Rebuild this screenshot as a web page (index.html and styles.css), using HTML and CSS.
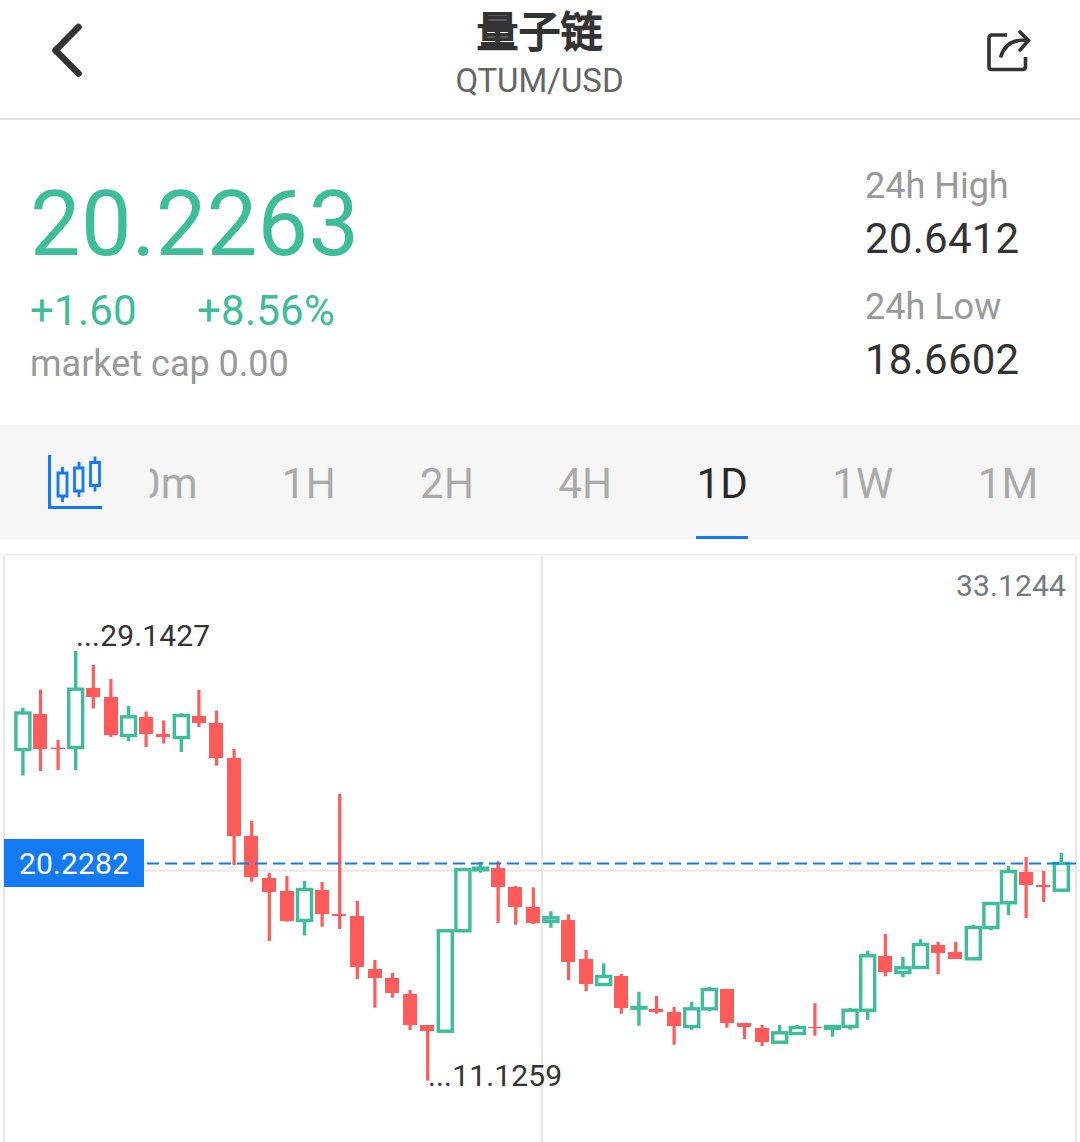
FILE: index.html
```
<!DOCTYPE html>
<html lang="zh-CN">
<head>
  <meta charset="UTF-8">
  <meta name="viewport" content="width=device-width, initial-scale=1.0">
  <title>QTUM/USD</title>
  <link rel="stylesheet" href="styles.css">
</head>
<body>
  <header class="header">
    <svg class="back" width="36" height="60" viewBox="0 0 36 60">
      <path d="M31.500 7 L8.500 30.200 L31.500 53.500"></path>
    </svg>
    <div class="heading">
      <h1>量子链</h1>
      <div class="pair">QTUM/USD</div>
    </div>
    <svg class="share" width="48" height="46" viewBox="0 0 48 46">
      <path d="M22 7 H7 Q4 7 4 10 V38.500 Q4 41.500 7 41.500 H37.500 Q40.500 41.500 40.500 38.500 V29"></path>
      <path d="M15.500 29.500 C19 17 28 11 42 12.500"></path>
      <path d="M35 4 L43.500 12.500 L35 22" stroke-linecap="round"></path>
    </svg>
  </header>

  <section class="quote">
    <div class="quote-main">
      <div class="price">20.2263</div>
      <div class="change">
        <span>+1.60</span>
        <span>+8.56%</span>
      </div>
      <div class="market-cap">market cap 0.00</div>
    </div>
    <div class="range">
      <div class="range-label">24h High</div>
      <div class="range-value">20.6412</div>
      <div class="range-label">24h Low</div>
      <div class="range-value">18.6602</div>
    </div>
  </section>

  <nav class="periods">
    <svg class="chart-type" width="56" height="56" viewBox="0 0 56 56">
      <path d="M2.500 1 V53.500 H55"></path>
      <path class="thin" d="M11 19 H20 V42 H11 Z M15.500 13 V19 M15.500 42 V48 M27.500 14 H36 V37 H27.500 Z M32 8 V14 M32 37 V43 M43.500 8.500 H52.500 V31.500 H43.500 Z M48 2.500 V8.500 M48 31.500 V37.500"></path>
    </svg>
    <div class="tabs">
      <span class="tab">30m</span>
      <span class="tab">1H</span>
      <span class="tab">2H</span>
      <span class="tab">4H</span>
      <span class="tab active">1D</span>
      <span class="tab">1W</span>
      <span class="tab">1M</span>
    </div>
  </nav>

  <svg id="chart" class="chart" width="1080" height="603" viewBox="0 539 1080 603">
    <g class="grid">
      <path class="top" d="M4 554.500 H1076"></path>
      <path d="M4 556 V1142 M542 556 V1142 M1076 556 V1142 M144 870.500 H1080"></path>
    </g>
    <g id="candles"></g>
    <path class="last-line" d="M147 863.500 H1076"></path>
    <rect class="last-tag" x="4" y="839" width="140" height="48"></rect>
    <text class="last-text" x="19" y="874">20.2282</text>
    <text class="axis-text" x="1066" y="596" text-anchor="end">33.1244</text>
    <text class="mark-text" x="76" y="646">...29.1427</text>
    <text class="mark-text" x="428" y="1086">...11.1259</text>
  </svg>

  <script src="chart.js"></script>
</body>
</html>
```
FILE: styles.css
```
body {
  margin: 0;
  width: 1080px;
  height: 1142px;
  overflow: hidden;
  background: #fff;
  color: #333;
  font-family: Roboto, "Noto Sans CJK SC", sans-serif;
}
.header {
  display: flex;
  justify-content: space-between;
  box-sizing: border-box;
  height: 120px;
  padding: 0 47px;
  border-bottom: 2px solid #e4e4e4;
}
.header svg,
.chart-type {
  fill: none;
  stroke: #333;
  flex: none;
}
.back {
  margin-top: 20px;
  stroke-width: 6.6;
  stroke-linecap: round;
  stroke-linejoin: round;
}
.share {
  margin-top: 28px;
  stroke-width: 3.6;
}
.heading {
  text-align: center;
  padding-left: 11px;
}
h1 {
  margin: 3px 0 -2px;
  font-size: 42px;
  line-height: 60px;
  font-weight: normal;
  -webkit-text-stroke: 1.8px #333;
}
.pair {
  font-size: 33px;
  line-height: 40px;
  color: #666;
}
.quote {
  display: flex;
  justify-content: space-between;
  box-sizing: border-box;
  height: 305px;
  padding: 43px 59px 0 30px;
}
.price {
  margin-top: 9px;
  font-size: 90px;
  line-height: 106px;
  letter-spacing: 0.3px;
  color: #3dbd9a;
}
.change {
  display: flex;
  gap: 60px;
  margin-top: 7px;
  font-size: 42px;
  line-height: 52px;
  letter-spacing: 0.25px;
  color: #3dbd9a;
}
.market-cap,
.range-label {
  font-size: 36px;
  line-height: 46px;
  color: #999;
}
.market-cap {
  margin-top: 4px;
}
.range {
  width: 156px;
  white-space: nowrap;
}
.range-value {
  margin: 1px 0 17px;
  font-size: 42px;
  line-height: 57px;
  letter-spacing: 0.25px;
}
.periods {
  display: flex;
  height: 114px;
  background: #f6f6f6;
}
.chart-type {
  margin: 29px 47px 0;
  stroke: #147af3;
  stroke-width: 3;
}
.chart-type .thin {
  stroke-width: 2.8;
}
.tabs {
  display: flex;
  flex: 1;
  justify-content: flex-end;
  gap: 84px;
  padding-right: 41.5px;
  overflow: hidden;
}
.tab {
  box-sizing: border-box;
  height: 114px;
  font-size: 42px;
  line-height: 117px;
  letter-spacing: 0.3px;
  color: #aaa;
}
.tab.active {
  color: #282828;
  border-bottom: 3px solid #147af3;
}
.chart {
  display: block;
  font-size: 30px;
  letter-spacing: 0.15px;
}
.grid path {
  stroke: #e8e8e8;
  stroke-width: 2;
}
.grid .top {
  stroke-width: 1;
}
.up {
  fill: none;
  stroke: #3dbd9a;
  stroke-width: 3.4;
}
.down {
  fill: #ff5b5b;
}
.last-line {
  stroke: #147af3;
  stroke-width: 2.2;
  stroke-dasharray: 12 6;
}
.last-tag {
  fill: #147af3;
}
.last-text {
  fill: #fff;
}
.axis-text {
  fill: #737b80;
}
.mark-text {
  fill: #333;
}
```
FILE: chart.js
```
// direction, high, body top, body bottom, low
const candles = [
  ['up', 707.7, 711.5, 751, 775.5],
  ['down', 689.5, 714, 749, 771],
  ['down', 740, 747.7, 749, 770],
  ['up', 651, 687.7, 749, 770],
  ['down', 665, 688, 697, 708.5],
  ['down', 679, 697, 735, 737],
  ['up', 706, 715.3, 737, 741],
  ['down', 711.5, 717, 734, 747],
  ['down', 720.5, 734, 737, 743.5],
  ['up', 713.5, 714, 739, 752],
  ['down', 690, 716, 723, 727],
  ['down', 710.5, 723, 758, 765.7],
  ['down', 749, 758, 836, 865],
  ['down', 821, 836, 877, 881.7],
  ['down', 873, 878, 892, 941],
  ['down', 876, 891, 921, 921.7],
  ['up', 881, 888, 922, 935.6],
  ['down', 882, 890, 914, 926.7],
  ['down', 793.7, 914, 916, 929],
  ['down', 901, 916, 967, 979],
  ['down', 960, 969, 978, 1007.7],
  ['down', 973, 978, 993, 997.7],
  ['down', 990, 994, 1025, 1030],
  ['down', 1025, 1025, 1031, 1080.7],
  ['up', 929.3, 929.3, 1032.7, 1032.7],
  ['up', 868, 868, 932.3, 932.3],
  ['up', 862, 866.7, 871.3, 872.7],
  ['down', 861.3, 868, 887, 923],
  ['down', 886, 887, 907, 924.7],
  ['down', 887.3, 907, 923, 924],
  ['up', 911.3, 916.3, 923, 927.7],
  ['down', 914.3, 920, 962, 980],
  ['down', 950, 959, 984, 991],
  ['up', 963.3, 975, 986, 986],
  ['down', 974, 976, 1008, 1013.7],
  ['up', 991.7, 1006, 1009.7, 1025.7],
  ['down', 996, 1009, 1012, 1013.7],
  ['down', 1007, 1012, 1026, 1044.7],
  ['up', 1002, 1007.3, 1028, 1029.7],
  ['up', 987, 988, 1010.3, 1011.3],
  ['down', 989, 989, 1023, 1027.7],
  ['down', 1023, 1023, 1027, 1039],
  ['down', 1025, 1028, 1042, 1046],
  ['up', 1025, 1031.3, 1043.7, 1043.7],
  ['up', 1025, 1026, 1035, 1035],
  ['down', 1003.3, 1027, 1028, 1035.7],
  ['up', 1025, 1025, 1029.7, 1036.7],
  ['up', 1008, 1008.7, 1028, 1029.7],
  ['up', 950.7, 954.3, 1011.7, 1019.7],
  ['down', 934, 956, 972, 976.3],
  ['up', 957, 966.3, 974, 977.3],
  ['up', 939.3, 943, 969, 969],
  ['down', 942, 945, 953, 974.3],
  ['down', 942, 952, 959, 959],
  ['up', 925, 926, 960.3, 960.3],
  ['up', 902, 902, 929, 930.3],
  ['up', 866, 870, 904.3, 915],
  ['down', 857, 872, 885, 918],
  ['down', 871, 885, 887, 902],
  ['up', 853, 862, 891.7, 891.7]
];

const START = 22.9;
const STEP = 17.6;

document.getElementById('candles').innerHTML = candles.map(([dir, high, top, bottom, low], i) => {
  const x = START + i * STEP;
  if (dir === 'up') {
    const h = Math.max(bottom - top - 3, 0.5);
    return `<g class="up">
      <path d="M${x} ${high} V${top + 1} M${x} ${bottom - 1} V${low}"></path>
      <rect x="${x - 7}" y="${top + 1.5}" width="14" height="${h}"></rect>
    </g>`;
  }
  return `<g class="down">
    <rect x="${x - 1.6}" y="${high}" width="3.2" height="${low - high}"></rect>
    <rect x="${Math.round(x - 7.3)}" y="${top}" width="14" height="${bottom - top}"></rect>
  </g>`;
}).join('');
```
